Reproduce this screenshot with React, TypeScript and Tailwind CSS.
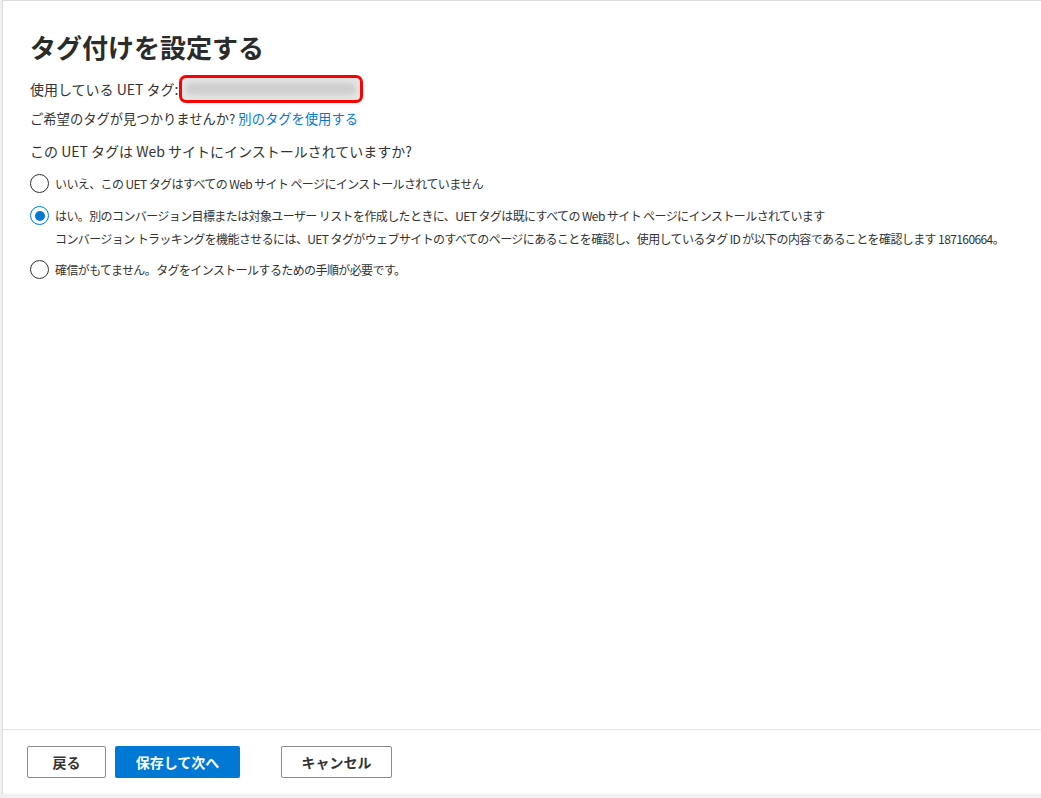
import React from "react";

const font = { fontFamily: '"Noto Sans CJK JP", "Noto Sans", sans-serif' };

function Radio({ checked }: { checked?: boolean }) {
  return (
    <span
      className={
        "flex h-[19px] w-[19px] shrink-0 items-center justify-center rounded-full border bg-white " +
        (checked ? "border-[#0078d4]" : "border-[#333333]")
      }
    >
      {checked && <span className="h-[10px] w-[10px] rounded-full bg-[#0078d4]" />}
    </span>
  );
}

export default function App() {
  return (
    <div className="flex h-[798px] w-[1041px] flex-col bg-[#f0f0f0] text-[#333333]" style={font}>
      <div className="ml-[2px] flex h-[794px] flex-col border-l border-t border-[#dcdcdc] bg-white">
        <div className="flex flex-1 flex-col pl-[27px] pr-[10px] pt-[26px] text-[14px] leading-[18px]">
          <h1 className="mb-[8px] text-[26px] font-bold leading-[40px] text-[#2b2b2b]">タグ付けを設定する</h1>

          <div className="flex items-center">
            <span>使用している UET タグ:</span>
            <span className="ml-[1px] flex h-[28px] w-[184px] items-center rounded-[7px] border-[3px] border-[#ff0000] bg-[#e4e4e4] px-[4px]">
              <span className="h-[12px] w-full rounded-full bg-[#cfcfcf] blur-[2px]" />
            </span>
          </div>

          <div className="mt-[7px] text-[13.3px]">
            ご希望のタグが見つかりませんか? <span className="text-[#0078d4]">別のタグを使用する</span>
          </div>

          <div className="mt-[14px]">この UET タグは Web サイトにインストールされていますか?</div>

          <div className="mt-[14px] flex flex-col gap-[13px] text-[12px] tracking-[-0.6px]">
            <label className="flex items-start gap-[6px]">
              <Radio />
              <span className="whitespace-nowrap pt-[1px]">いいえ、この UET タグはすべての Web サイト ページにインストールされていません</span>
            </label>
            <label className="flex items-start gap-[6px]">
              <Radio checked />
              <span className="flex flex-col gap-[5px] whitespace-nowrap pt-[1px]">
                <span>はい。別のコンバージョン目標または対象ユーザー リストを作成したときに、UET タグは既にすべての Web サイト ページにインストールされています</span>
                <span>
                  コンバージョン トラッキングを機能させるには、UET タグがウェブサイトのすべてのページにあることを確認し、使用しているタグ ID が以下の内容であることを確認します 187160664。
                </span>
              </span>
            </label>
            <label className="-mt-[1px] flex items-start gap-[6px]">
              <Radio />
              <span className="whitespace-nowrap pt-[1px]">確信がもてません。タグをインストールするための手順が必要です。</span>
            </label>
          </div>
        </div>

        <div className="flex h-[65px] items-start gap-[9px] border-t border-[#e6e6e6] px-[24px] pt-[16px] text-[14px] font-bold">
          <button className="h-[32px] w-[79px] rounded-[2px] border border-[#8a8a8a] bg-white text-[#333333]">戻る</button>
          <button className="h-[32px] w-[125px] rounded-[2px] bg-[#0078d4] text-white">保存して次へ</button>
          <button className="ml-[32px] h-[32px] w-[111px] rounded-[2px] border border-[#8a8a8a] bg-white text-[#333333]">キャンセル</button>
        </div>
      </div>
    </div>
  );
}
